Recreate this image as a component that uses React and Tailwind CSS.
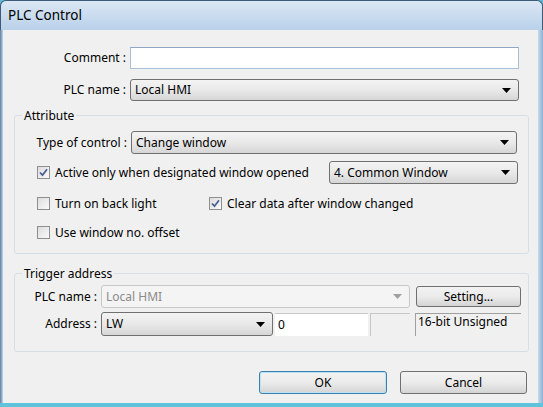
import React from 'react';

const font = { fontFamily: '"Noto Sans", "Liberation Sans", sans-serif' };

const Arrow = ({ disabled }) => (
  <svg width="9" height="5" viewBox="0 0 9 5" className="shrink-0">
    <path d="M0 0 H9 L4.5 5 Z" fill={disabled ? '#a0a0a0' : '#000'} />
  </svg>
);

const Combo = ({ value, className = '', disabled }) => (
  <div
    className={
      'flex items-center justify-between rounded-[3px] border pl-[4px] pr-[7px] ' +
      (disabled
        ? 'border-[#c5c9cc] bg-[#f4f4f4] text-[#8a8a8a] '
        : 'border-[#707070] bg-gradient-to-b from-[#f3f3f3] via-[#e9e9e9] to-[#d6d6d6] text-black ') +
      className
    }
  >
    <span className="leading-none">{value}</span>
    <Arrow disabled={disabled} />
  </div>
);

const Check = ({ checked }) => (
  <div className="w-[13px] h-[13px] border border-[#8e8f8f] bg-gradient-to-br from-[#dcdcdc] to-[#fafafa] flex items-center justify-center shrink-0">
    {checked && (
      <svg width="9" height="9" viewBox="0 0 9 9">
        <path d="M1 4.5 L3.5 7.2 L8 1.2" stroke="#4a5f97" strokeWidth="1.8" fill="none" />
      </svg>
    )}
  </div>
);

const Button = ({ label, primary, className = '' }) => (
  <div
    className={
      'flex items-center justify-center rounded-[3px] border bg-gradient-to-b from-[#f2f2f2] via-[#ebebeb] to-[#d4d4d4] ' +
      (primary ? 'border-[#3c7fb1] shadow-[inset_0_0_0_1px_#b9e2f5] ' : 'border-[#707070] ') +
      className
    }
  >
    {label}
  </div>
);

export default function App() {
  return (
    <div className="w-[543px] h-[407px] overflow-hidden flex flex-col bg-[#5fb8d4] text-[12px] text-black" style={font}>
      {/* Title bar */}
      <div className="h-[30px] shrink-0 rounded-t-[6px] border border-b-0 border-[#3d5a78] bg-gradient-to-b from-[#dbe7f4] to-[#b9d1ea] flex items-center pl-[7px]">
        <span className="text-[13.5px] text-black">PLC Control</span>
      </div>

      <div className="flex-1 flex min-h-0">
        <div className="w-[3px] bg-gradient-to-r from-[#5a7d9c] to-[#c4d9ee]" />
        <div className="w-[535px] bg-[#f0f0f0] flex flex-col">
          {/* Comment */}
          <div className="flex items-center mt-[17px]">
            <div className="w-[123px] text-right">Comment :</div>
            <div className="ml-[4px] w-[389px] h-[22px] border border-[#a9bfd6] border-t-[#8ea8c4] bg-white" />
          </div>
          {/* PLC name */}
          <div className="flex items-center mt-[10px]">
            <div className="w-[123px] text-right">PLC name :</div>
            <Combo value="Local HMI" className="ml-[4px] w-[389px] h-[22px]" />
          </div>

          {/* Attribute */}
          <fieldset className="ml-[11px] mt-[7px] w-[515px] h-[146px] border border-[#d5dfe5] rounded-[3px] px-0">
            <legend className="ml-[7px] px-[2px] leading-[15px]">Attribute</legend>
            <div className="flex items-center mt-[8px]">
              <div className="w-[112px] text-right">Type of control :</div>
              <Combo value="Change window" className="ml-[4px] w-[386px] h-[23px]" />
            </div>
            <div className="flex items-center mt-[7px] h-[23px]">
              <div className="ml-[22px]"><Check checked /></div>
              <span className="ml-[5px] w-[274px]">Active only when designated window opened</span>
              <Combo value="4. Common Window" className="w-[189px] h-[23px]" />
            </div>
            <div className="flex items-center mt-[13px] h-[13px]">
              <div className="ml-[22px]"><Check /></div>
              <span className="ml-[5px] w-[154px]">Turn on back light</span>
              <Check checked />
              <span className="ml-[5px]">Clear data after window changed</span>
            </div>
            <div className="flex items-center mt-[16px] h-[13px]">
              <div className="ml-[22px]"><Check /></div>
              <span className="ml-[5px]">Use window no. offset</span>
            </div>
          </fieldset>

          {/* Trigger address */}
          <fieldset className="ml-[11px] mt-[12px] w-[515px] h-[86px] border border-[#d5dfe5] rounded-[3px] px-0">
            <legend className="ml-[7px] px-[2px] leading-[15px]">Trigger address</legend>
            <div className="flex items-center mt-[4px]">
              <div className="w-[82px] text-right">PLC name :</div>
              <Combo value="Local HMI" disabled className="ml-[4px] w-[309px] h-[23px]" />
              <Button label="Setting..." className="ml-[6px] w-[105px] h-[21px]" />
            </div>
            <div className="flex items-center mt-[4px]">
              <div className="w-[82px] text-right">Address :</div>
              <Combo value="LW" className="ml-[4px] w-[172px] h-[24px]" />
              <div className="ml-[2px] w-[93px] h-[23px] bg-white border-t border-[#c8c8c8] flex items-center pl-[3px]">0</div>
              <div className="ml-[2px] w-[40px] h-[23px] border-t border-l border-[#c8c8c8]" />
              <div className="ml-[5px] w-[106px] h-[23px] border-t border-l border-[#a0a0a0] leading-[16px] pl-[2px]">16-bit Unsigned</div>
            </div>
          </fieldset>

          {/* Buttons */}
          <div className="flex mt-[19px]">
            <Button label="OK" primary className="ml-[256px] w-[128px] h-[23px]" />
            <Button label="Cancel" className="ml-[13px] w-[127px] h-[23px]" />
          </div>
        </div>
        <div className="w-[5px] bg-gradient-to-r from-[#c4d9ee] to-[#8fb3d6]" />
      </div>
      <div className="h-[4px] bg-[#5fc3dc]" />
    </div>
  );
}
